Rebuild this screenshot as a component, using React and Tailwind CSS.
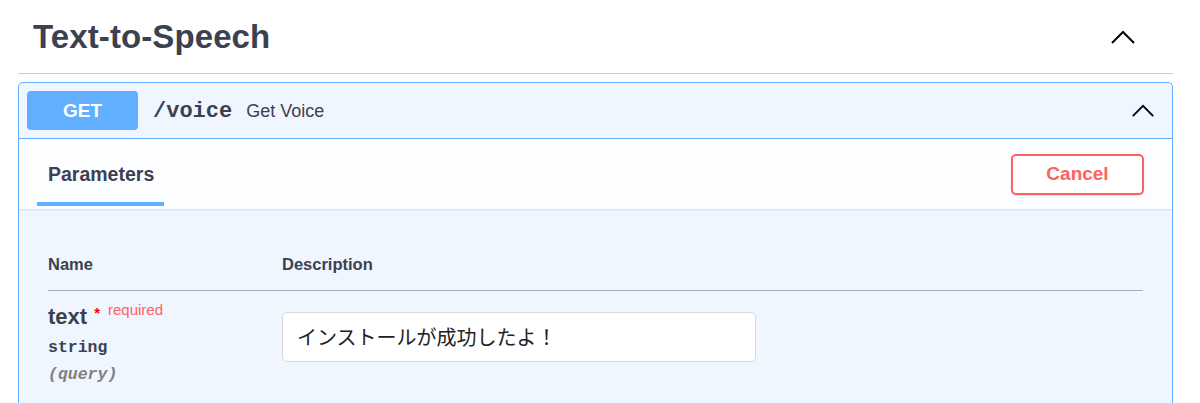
import React from "react";

const Chevron = ({ className }) => (
  <svg viewBox="0 0 24 14" className={className} fill="none" stroke="currentColor" strokeWidth="2">
    <path d="M1 13 L12 2 L23 13" />
  </svg>
);

const App = () => {
  return (
    <div className="w-[1200px] h-[403px] overflow-hidden bg-white font-['Liberation_Sans',sans-serif] text-[#3b4151]">
      <div className="px-[18px] pr-[27px]">
        {/* Tag header */}
        <div className="flex items-center justify-between h-[74px] pl-[15px] pr-[38px] border-b border-[#c9ced6]">
          <h4 className="text-[33px] font-bold tracking-[0.1px]">Text-to-Speech</h4>
          <Chevron className="w-[24px] h-[14px] text-black" />
        </div>

        {/* Operation block */}
        <div className="mt-[8px] border border-[#61affe] rounded-[5px] bg-[#eff6ff]">
          <div className="flex items-center h-[56px] pl-[8px] pr-[17px] border-b border-[#61affe]">
            <span className="w-[111px] h-[39px] flex items-center justify-center rounded-[4px] bg-[#61affe] text-white text-[19px] font-bold pt-[1px]">
              GET
            </span>
            <span className="ml-[15px] font-['Liberation_Mono',monospace] font-bold text-[22px] pt-[2px]">/voice</span>
            <span className="ml-[14px] text-[18px] pt-[2px]">Get Voice</span>
            <Chevron className="ml-auto w-[24px] h-[13px] text-black" />
          </div>

          {/* Section header */}
          <div className="flex items-stretch justify-between h-[70px] bg-[#fcfdff] shadow-[0_1px_2px_rgba(0,0,0,0.1)] pl-[18px] pr-[28px]">
            <div className="flex flex-col justify-end">
              <div className="flex-1 flex items-center px-[11px] pt-[8px] text-[19.5px] font-bold">Parameters</div>
              <div className="h-[4px] w-[127px] bg-[#61affe] mb-[3px]" />
            </div>
            <div className="flex items-center">
              <button className="w-[133px] h-[41px] rounded-[5px] border-2 border-[#ff6060] text-[#ff6060] text-[19px] font-bold bg-white shadow-[0_1px_2px_rgba(0,0,0,0.1)]">
                Cancel
              </button>
            </div>
          </div>

          {/* Parameters table */}
          <div className="px-[29px] pt-[43px]">
            <div className="flex items-end pb-[13px] border-b border-[#a6adb8] text-[16.5px] font-bold">
              <div className="w-[234px]">Name</div>
              <div>Description</div>
            </div>
            <div className="flex pt-[13px] pb-[20px]">
              <div className="w-[234px]">
                <div className="flex items-start">
                  <span className="text-[22px] font-bold leading-[26px]">text</span>
                  <span className="ml-[7px] text-[#ff0000] text-[15px] font-bold leading-[14px] mt-[2px]">*</span>
                  <span className="ml-[8px] text-[#ff6060] text-[15px] leading-[16px] -mt-[2px]">required</span>
                </div>
                <div className="mt-[6px] font-['Liberation_Mono',monospace] font-bold text-[16.5px]">string</div>
                <div className="mt-[2px] font-['Liberation_Mono',monospace] italic font-bold text-[16.5px] text-[#808080]">(query)</div>
              </div>
              <div>
                <input
                  readOnly
                  value="インストールが成功したよ！"
                  className="mt-[8px] w-[474px] h-[50px] rounded-[5px] border border-[#d9d9d9] bg-white px-[14px] text-[20px] text-[#222] font-['Liberation_Sans','Noto_Sans_CJK_JP',sans-serif] outline-none"
                />
              </div>
            </div>
          </div>
        </div>
      </div>
    </div>
  );
};

export default App;
